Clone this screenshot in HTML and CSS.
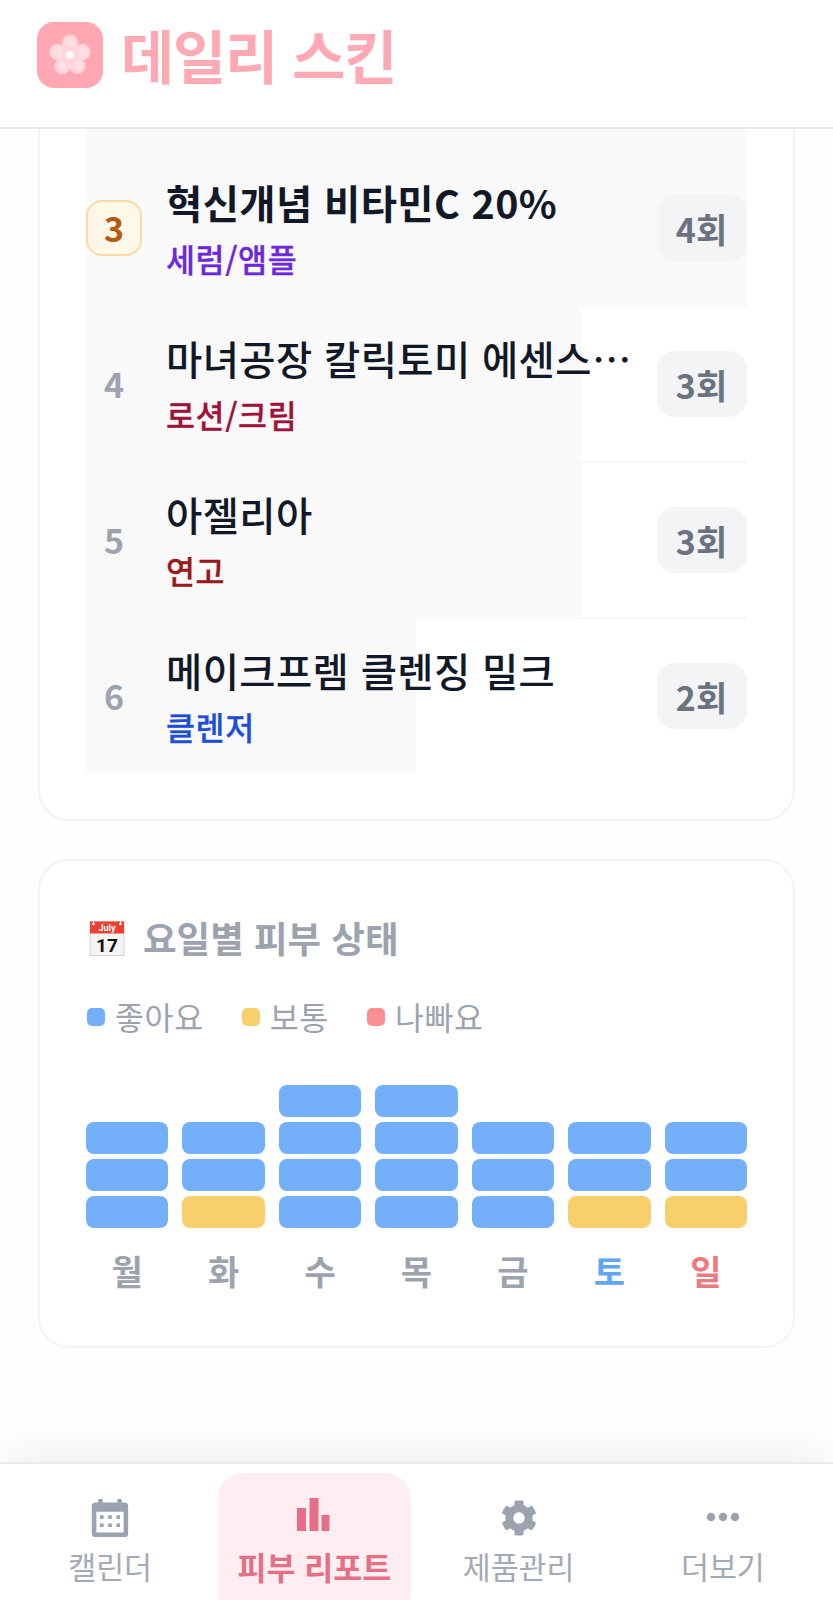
FILE: index.html
```html
<!DOCTYPE html>
<html lang="ko">
<head>
<meta charset="utf-8">
<title>데일리 스킨</title>
<link rel="stylesheet" href="styles.css">
</head>
<body>
<div class="app">
  <header class="topbar">
    <svg class="logo" viewBox="0 0 66 66" aria-hidden="true">
      <defs>
        <radialGradient id="petal" cx="50%" cy="50%" r="60%">
          <stop offset="0" stop-color="#ffffff" stop-opacity=".7"/>
          <stop offset="1" stop-color="#ffffff" stop-opacity=".45"/>
        </radialGradient>
      </defs>
      <rect width="66" height="66" rx="17" fill="#ffa8b4"/>
      <circle cx="33" cy="20.500" r="8" fill="url(#petal)"/>
      <circle cx="20.500" cy="30" r="8" fill="url(#petal)"/>
      <circle cx="45.500" cy="30" r="8" fill="url(#petal)"/>
      <circle cx="25.500" cy="44" r="8" fill="url(#petal)"/>
      <circle cx="40.500" cy="44" r="8" fill="url(#petal)"/>
      <circle cx="33" cy="33" r="9" fill="#ffd6dc"/>
      <circle cx="33" cy="33" r="3.800" fill="#ffffff"/>
    </svg>
    <h1 class="brand">데일리 스킨</h1>
  </header>

  <main class="content">
    <section class="card card-ranking">
      <ol class="rank-list">
        <li class="rank-row rank-row-hidden"><span class="bar" style="width:100%"></span></li>
        <li class="rank-row">
          <span class="bar" style="width:100%"></span>
          <span class="rank rank-medal">3</span>
          <div class="item">
            <div class="item-name item-name-top">혁신개념 비타민C 20%</div>
            <div class="item-kind kind-serum">세럼/앰플</div>
          </div>
          <span class="count">4회</span>
        </li>
        <li class="rank-row">
          <span class="bar" style="width:75%"></span>
          <span class="rank">4</span>
          <div class="item">
            <div class="item-name">마녀공장 칼릭토미 에센스토너 대용량</div>
            <div class="item-kind kind-lotion">로션/크림</div>
          </div>
          <span class="count">3회</span>
        </li>
        <li class="rank-row">
          <span class="bar" style="width:75%"></span>
          <span class="rank">5</span>
          <div class="item">
            <div class="item-name">아젤리아</div>
            <div class="item-kind kind-ointment">연고</div>
          </div>
          <span class="count">3회</span>
        </li>
        <li class="rank-row">
          <span class="bar" style="width:50%"></span>
          <span class="rank">6</span>
          <div class="item">
            <div class="item-name">메이크프렘 클렌징 밀크</div>
            <div class="item-kind kind-cleanser">클렌저</div>
          </div>
          <span class="count">2회</span>
        </li>
      </ol>
    </section>

    <section class="card card-week">
      <h2 class="section-title">
        <svg class="cal-emoji" viewBox="0 0 36 36" aria-hidden="true">
          <rect x="1" y="1.500" width="34" height="34" fill="#f4f4f4" stroke="#c9c9c9" stroke-width=".8"/>
          <rect x="1" y="1.500" width="34" height="12" fill="#ee3f35"/>
          <circle cx="4.500" cy="4" r="1.300" fill="#fff"/>
          <circle cx="31.500" cy="4" r="1.300" fill="#fff"/>
          <rect x="4" y="0" width="1" height="4" fill="#fff"/>
          <rect x="31" y="0" width="1" height="4" fill="#fff"/>
          <text class="cal-month" x="18" y="11" text-anchor="middle">July</text>
          <text class="cal-day" x="18" y="32" text-anchor="middle">17</text>
        </svg>
        <span>요일별 피부 상태</span>
      </h2>
      <ul class="legend">
        <li class="legend-item"><i class="swatch good"></i>좋아요</li>
        <li class="legend-item"><i class="swatch okay"></i>보통</li>
        <li class="legend-item"><i class="swatch bad"></i>나빠요</li>
      </ul>
      <div class="week">
        <div class="day"><div class="stack"><i class="cell good"></i><i class="cell good"></i><i class="cell good"></i></div><span class="day-label">월</span></div>
        <div class="day"><div class="stack"><i class="cell good"></i><i class="cell good"></i><i class="cell okay"></i></div><span class="day-label">화</span></div>
        <div class="day"><div class="stack"><i class="cell good"></i><i class="cell good"></i><i class="cell good"></i><i class="cell good"></i></div><span class="day-label">수</span></div>
        <div class="day"><div class="stack"><i class="cell good"></i><i class="cell good"></i><i class="cell good"></i><i class="cell good"></i></div><span class="day-label">목</span></div>
        <div class="day"><div class="stack"><i class="cell good"></i><i class="cell good"></i><i class="cell good"></i></div><span class="day-label">금</span></div>
        <div class="day"><div class="stack"><i class="cell good"></i><i class="cell good"></i><i class="cell okay"></i></div><span class="day-label sat">토</span></div>
        <div class="day"><div class="stack"><i class="cell good"></i><i class="cell good"></i><i class="cell okay"></i></div><span class="day-label sun">일</span></div>
      </div>
    </section>
  </main>

  <nav class="tabbar">
    <a class="tab">
      <svg class="tab-icon" viewBox="-2 0 44 42" aria-hidden="true">
        <path fill="#9ca3af" d="M8 0h3a1 1 0 0 1 1 1v3h16V1a1 1 0 0 1 1-1h3a1 1 0 0 1 1 1v3h3a4 4 0 0 1 4 4v30a4 4 0 0 1-4 4H4a4 4 0 0 1-4-4V8a4 4 0 0 1 4-4h3V1a1 1 0 0 1 1-1z"/>
        <rect x="5" y="14" width="30" height="23" rx="1" fill="#fff"/>
        <g fill="#9ca3af">
          <rect x="9" y="18" width="4" height="4"/><rect x="18" y="18" width="4" height="4"/><rect x="27" y="18" width="4" height="4"/>
          <rect x="9" y="27" width="4" height="4"/><rect x="18" y="27" width="4" height="4"/><rect x="27" y="27" width="4" height="4"/>
        </g>
      </svg>
      <span class="tab-label">캘린더</span>
    </a>
    <a class="tab tab-active">
      <svg class="tab-icon" viewBox="0 0 40 42" aria-hidden="true">
        <g fill="#e56f86">
          <rect x="3" y="11" width="9" height="23"/><rect x="15.500" y="1" width="9" height="33"/><rect x="27.500" y="18" width="8" height="16"/>
        </g>
      </svg>
      <span class="tab-label">피부 리포트</span>
    </a>
    <a class="tab">
      <svg class="tab-icon" viewBox="-26 -26 564 564" aria-hidden="true">
        <path fill="#9ca3af" d="M487.4 315.7l-42.6-24.6c4.3-23.2 4.3-47 0-70.2l42.6-24.6c4.9-2.800 7.100-8.600 5.500-14-11.100-35.600-30-67.800-54.700-94.600-3.800-4.100-10-5.100-14.800-2.300L380.800 110c-17.900-15.400-38.500-27.300-60.800-35.100V25.800c0-5.600-3.900-10.500-9.400-11.700-36.700-8.200-74.300-7.800-109.200 0-5.500 1.200-9.400 6.100-9.400 11.700V75c-22.200 7.900-42.800 19.800-60.800 35.100L88.700 85.500c-4.900-2.800-11-1.900-14.800 2.300-24.700 26.700-43.600 58.900-54.700 94.600-1.700 5.400.6 11.200 5.500 14L67.300 221c-4.300 23.200-4.300 47 0 70.200l-42.600 24.600c-4.900 2.800-7.100 8.600-5.500 14 11.100 35.600 30 67.800 54.700 94.600 3.800 4.100 10 5.100 14.800 2.300l42.600-24.600c17.900 15.400 38.500 27.300 60.800 35.100v49.200c0 5.600 3.900 10.500 9.400 11.700 36.700 8.200 74.300 7.800 109.200 0 5.500-1.200 9.400-6.100 9.400-11.700v-49.200c22.200-7.900 42.800-19.800 60.800-35.100l42.600 24.600c4.900 2.800 11 1.900 14.800-2.300 24.700-26.700 43.600-58.900 54.700-94.600 1.500-5.500-.7-11.300-5.600-14.100zM256 336c-44.100 0-80-35.900-80-80s35.900-80 80-80 80 35.900 80 80-35.900 80-80 80z"/>
      </svg>
      <span class="tab-label">제품관리</span>
    </a>
    <a class="tab">
      <svg class="tab-icon" viewBox="0 0 40 42" aria-hidden="true">
        <g fill="#9ca3af"><circle cx="8" cy="20" r="4.200"/><circle cx="20" cy="20" r="4.200"/><circle cx="32" cy="20" r="4.200"/></g>
      </svg>
      <span class="tab-label">더보기</span>
    </a>
  </nav>
</div>
</body>
</html>
```

FILE: styles.css
```css
* { box-sizing: border-box; }
html, body { margin: 0; padding: 0; }
body {
  font-family: "Noto Sans CJK KR", "Noto Sans", sans-serif;
  background: #ffffff;
  color: #111827;
}
ol, ul { list-style: none; margin: 0; padding: 0; }
h1, h2 { margin: 0; }

.app {
  width: 833px;
  height: 1600px;
  display: flex;
  flex-direction: column;
  overflow: hidden;
}

.topbar {
  flex: none;
  height: 129px;
  padding: 0 37px 18px;
  display: flex;
  align-items: center;
  gap: 18px;
  background: #fff;
  border-bottom: 2px solid #e8e9ea;
  position: relative;
  z-index: 2;
}
.logo { width: 66px; height: 66px; flex: none; }
.brand {
  font-size: 57.75px;
  font-weight: 700;
  letter-spacing: -1.1px;
  line-height: 1.2;
  color: #ffa9b5;
}

.content {
  flex: 1;
  min-height: 0;
  overflow: hidden;
  padding: 0 38px;
  background: #fefefe;
  display: flex;
  flex-direction: column;
  gap: 38px;
}

.card {
  flex: none;
  background: #fff;
  border: 2px solid #f3f4f6;
  border-radius: 31px;
}
.card-ranking { margin-top: -136px; padding: 0 46.5px 46px 46px; }
.card-week { padding: 49px 46px 0; height: 489px; }

.rank-row {
  position: relative;
  height: 156px;
  display: flex;
  align-items: center;
  gap: 24px;
  border-bottom: 2px solid #f5f6f7;
}
.rank-row:last-child { border-bottom: 0; height: 154px; }
.rank-row-hidden { border-bottom: 0; }
.bar {
  position: absolute;
  left: 0;
  top: 0;
  bottom: -2px;
  background: #f9f9fa;
}
.rank-row:last-child .bar { bottom: 0; }

.rank, .item, .count { position: relative; }
.rank {
  flex: none;
  width: 56px;
  height: 56px;
  display: flex;
  align-items: center;
  justify-content: center;
  font-size: 34px;
  font-weight: 700;
  color: #9ca3af;
  line-height: 1;
}
.rank-medal {
  background: #fff7e8;
  border: 2px solid #fad9a6;
  border-radius: 16px;
  color: #b45a12;
}
.item { flex: 1; min-width: 0; }
.item-name {
  font-size: 39.4px;
  font-weight: 500;
  letter-spacing: .4px;
  line-height: 55px;
  color: #111827;
  white-space: nowrap;
  overflow: hidden;
  text-overflow: ellipsis;
}
.item-name-top { font-weight: 700; }
.item-kind {
  font-size: 31.5px;
  font-weight: 500;
  -webkit-text-stroke: .3px currentColor;
  letter-spacing: .6px;
  line-height: 47px;
  margin-top: 6px;
}
.kind-serum { color: #6d28d9; }
.kind-lotion { color: #9f1239; }
.kind-ointment { color: #991b1b; }
.kind-cleanser { color: #1d4ed8; }
.count {
  flex: none;
  width: 90px;
  height: 66px;
  border-radius: 18px;
  background: #f3f4f6;
  color: #6b7280;
  font-size: 34px;
  font-weight: 700;
  display: flex;
  align-items: center;
  justify-content: center;
}

.section-title {
  display: flex;
  align-items: center;
  gap: 18px;
  font-size: 36.5px;
  font-weight: 700;
  line-height: 55px;
  color: #9ca3af;
}
.cal-emoji { width: 36px; height: 36px; flex: none; margin-left: 3px; }
.cal-month { font-family: "Roboto", sans-serif; font-size: 9px; fill: #fff; }
.cal-day { font-family: "Roboto", sans-serif; font-size: 19px; font-weight: 700; fill: #111; }

.legend {
  display: flex;
  gap: 37px;
  margin-top: 28px;
}
.legend-item {
  display: flex;
  align-items: center;
  gap: 10px;
  font-size: 31.5px;
  letter-spacing: .6px;
  line-height: 47px;
  color: #9ca3af;
}
.swatch { width: 18px; height: 18px; border-radius: 5px; margin-left: 1px; }
.good { background: #74aff9; }
.okay { background: #f8d06b; }
.bad { background: #f98f92; }

.week {
  display: grid;
  grid-template-columns: repeat(7, 1fr);
  gap: 14px;
  margin-top: 43px;
}
.day {
  display: flex;
  flex-direction: column;
  justify-content: flex-end;
  height: 213px;
}
.stack { display: flex; flex-direction: column; gap: 5px; }
.cell { display: block; height: 32px; border-radius: 8px; }
.day-label {
  margin-top: 18px;
  font-size: 34px;
  font-weight: 700;
  line-height: 50px;
  text-align: center;
  color: #9ca3af;
}
.sat { color: #60a5fa; }
.sun { color: #ec7a80; }

.tabbar {
  flex: none;
  height: 138px;
  padding: 9px 8px 0;
  display: grid;
  grid-template-columns: repeat(4, 1fr);
  background: #fff;
  border-top: 2px solid #e9eaeb;
  box-shadow: 0 -8px 40px rgba(0, 0, 0, .06);
  position: relative;
  z-index: 2;
}
.tab {
  height: 150px;
  margin: 0 5.5px;
  padding-top: 24px;
  border-radius: 26px;
  display: flex;
  flex-direction: column;
  align-items: center;
  color: #a4aab4;
}
.tab-active { background: #ffeef1; color: #e56f86; }
.tab-active .tab-label { font-weight: 700; font-size: 31.5px; }
.tab-icon { width: 40px; height: 42px; flex: none; }
.tab-label {
  font-size: 30.4px;
  line-height: 47px;
  margin-top: 4px;
  white-space: nowrap;
}
```
